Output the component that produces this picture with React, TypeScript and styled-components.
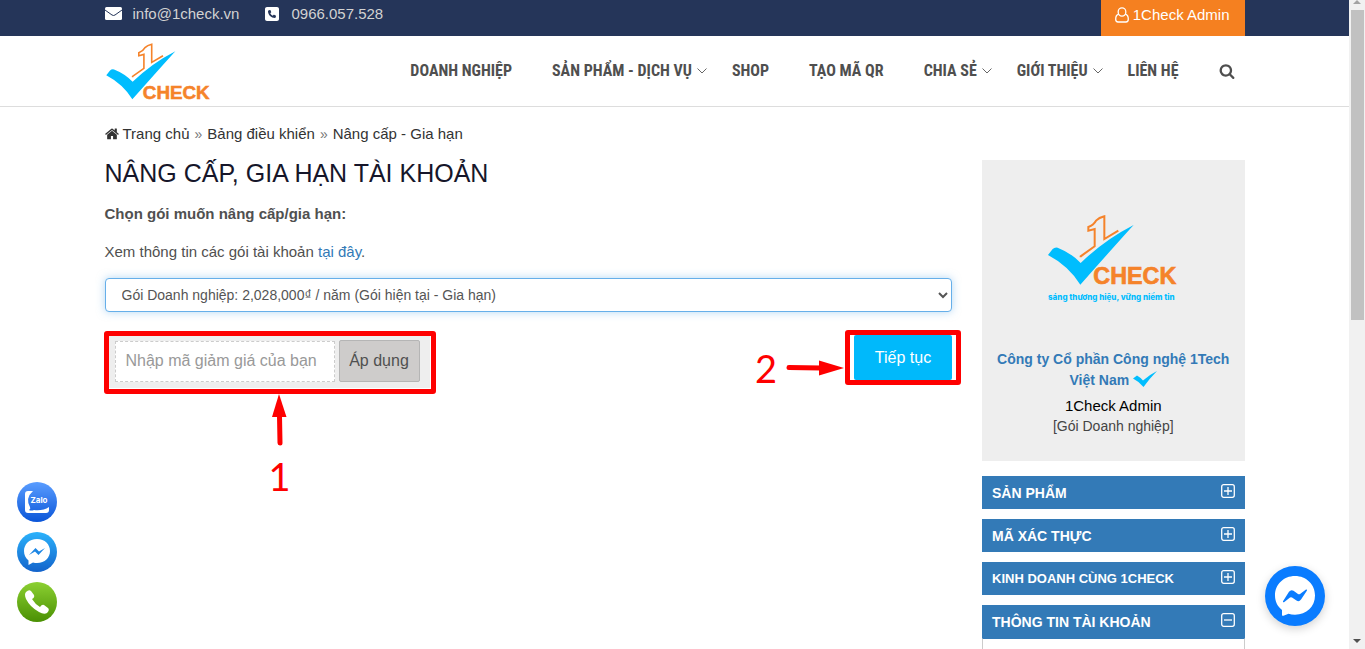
import React from "react";
import styled, { createGlobalStyle } from "styled-components";
import { FaSquarePhone } from "react-icons/fa6";

const GlobalStyle = createGlobalStyle`
  *, *::before, *::after { box-sizing: border-box; }
  html, body { margin: 0; background: #fff; }
  body {
    font-family: "Liberation Sans", Arial, sans-serif;
    font-size: 15px;
    line-height: 20px;
    color: #505050;
    overflow: hidden;
  }
  a { color: inherit; text-decoration: none; }
  h1, p, ul { margin: 0; padding: 0; }
  ul { list-style: none; }
`;

/* ---------- page frame ---------- */

const Frame = styled.div`
  display: flex;
  height: 100vh;
`;

const Page = styled.div`
  flex: 1;
  min-width: 0;
  overflow: hidden;
`;

const ScrollTrack = styled.div`
  display: flex;
  flex-direction: column;
  align-items: center;
  width: 16px;
  background: #f1f1f1;
`;

const ScrollThumb = styled.div`
  width: 13px;
  height: 310px;
  background: #c1c1c1;
`;

const ScrollArrow = styled.svg`
  flex: none;
  width: 16px;
  height: 10px;
`;

const ScrollSpace = styled.div`
  flex: 1;
`;

const Container = styled.div`
  max-width: 1170px;
  margin: 0 auto;
  padding: 0 15px;
`;

/* ---------- top bar ---------- */

const TopBar = styled.div`
  background: #253559;
  color: #d2d2d2;
`;

const TopRow = styled(Container)`
  display: flex;
  justify-content: space-between;
  height: 36px;
`;

const Contacts = styled.div`
  display: flex;
  gap: 25px;
  padding-top: 4px;
`;

const Contact = styled.a`
  display: flex;
  gap: 11px;
  height: 20px;
  svg { margin-top: 2px; color: #fff; }
`;

const AdminLink = styled.a`
  display: flex;
  gap: 4px;
  padding: 5px 15px 0 14px;
  background: #f58020;
  color: #fff;
  svg { margin-top: 2px; }
`;

/* ---------- header ---------- */

const Header = styled.header`
  border-bottom: 1px solid #ddd;
`;

const HeaderRow = styled(Container)`
  display: flex;
  justify-content: space-between;
  height: 70px;
`;

const LogoLink = styled.a`
  padding: 7px 0 0 1px;
`;

const Nav = styled.nav`
  display: flex;
  align-items: center;
  gap: 40px;
  padding-right: 10px;
  font-family: "Roboto Condensed", "Liberation Sans Narrow", "Liberation Sans", sans-serif;
  font-size: 16px;
  font-weight: 700;
  color: #4f4f4f;
`;

const NavItem = styled.a`
  position: relative;
  white-space: nowrap;
`;

const Chevron = styled.svg`
  position: absolute;
  left: calc(100% + 5px);
  top: 7px;
`;

const SearchButton = styled.button`
  display: flex;
  padding: 0;
  border: 0;
  background: none;
  color: #4f4f4f;
`;

/* ---------- body ---------- */

const Breadcrumb = styled.nav`
  display: flex;
  align-items: center;
  gap: 5px;
  padding-top: 17px;
  color: #333;
  span { color: #777; font-size: 14px; }
`;

const HomeLink = styled.a`
  display: flex;
  align-items: center;
  gap: 4px;
`;

const Columns = styled.div`
  display: flex;
  margin: 0 -15px;
  padding-top: 16px;
`;

const Main = styled.main`
  width: 75%;
  padding: 0 15px;
`;

const Aside = styled.aside`
  width: 25%;
  padding: 0 15px;
`;

const Title = styled.h1`
  font-size: 25px;
  line-height: 26px;
  font-weight: 400;
  color: #16162a;
`;

const FieldLabel = styled.label`
  display: block;
  margin-top: 18px;
  font-weight: 700;
`;

const Info = styled.p`
  margin-top: 18px;
  a { color: #337ab7; }
`;

const PackageSelect = styled.select`
  display: block;
  width: 100%;
  height: 34px;
  margin-top: 16px;
  padding: 0 12px;
  border: 1px solid #66afe9;
  border-radius: 4px;
  outline: 0;
  background: #fff;
  box-shadow: 0 0 8px rgba(102, 175, 233, 0.5);
  color: #555;
  font: 14px/20px "Liberation Sans", Arial, sans-serif;
`;

const Actions = styled.div`
  display: flex;
  align-items: flex-start;
  justify-content: space-between;
  margin-top: 20px;
`;

const Coupon = styled.div`
  position: relative;
  display: flex;
  align-items: center;
  gap: 4px;
  height: 56px;
  padding: 2px 10px 0;
  background: #eee;
`;

const CouponInput = styled.input`
  width: 220px;
  height: 41px;
  padding: 0 10px;
  border: 1px dashed #ccc;
  background: #fff;
  font: 16px/20px "Liberation Sans", Arial, sans-serif;
  &::placeholder { color: #999; opacity: 1; }
`;

const ApplyButton = styled.button`
  width: 81px;
  height: 42px;
  padding: 0;
  border: 1px solid #b5b5b5;
  border-radius: 2px;
  background: #cecccb;
  color: #505050;
  font: 16px/20px "Liberation Sans", Arial, sans-serif;
`;

const Continue = styled.div`
  position: relative;
  margin-top: 3px;
`;

const ContinueButton = styled.button`
  display: block;
  width: 98px;
  height: 45px;
  padding: 0;
  border: 0;
  border-radius: 2px;
  background: #00b9fb;
  color: #fff;
  font: 16px/20px "Liberation Sans", Arial, sans-serif;
`;

/* ---------- numbered guide marks, drawn over the form ---------- */

const Highlight = styled.div<{ $inset: string }>`
  position: absolute;
  inset: ${(p) => p.$inset};
  border: 5px solid #fe0000;
  border-radius: 3px;
  pointer-events: none;
`;

const StepBelow = styled.div`
  position: absolute;
  top: 62px;
  left: 164px;
  display: flex;
  flex-direction: column;
  align-items: center;
  gap: 6px;
`;

const StepBefore = styled.div`
  position: absolute;
  top: 9px;
  right: 108px;
  display: flex;
  align-items: center;
  gap: 9px;
`;

const StepNumber = styled.span`
  font-family: Lato, "Open Sans", sans-serif;
  font-size: 38px;
  line-height: 48px;
  color: #fe0000;
`;

/* ---------- sidebar ---------- */

const ProfileCard = styled.div`
  display: flex;
  flex-direction: column;
  align-items: center;
  height: 301px;
  margin-bottom: 15px;
  padding-top: 54px;
  background: #eee;
  text-align: center;
  color: #444;
`;

const Company = styled.a`
  margin: 45px 10px 0;
  font-size: 14px;
  line-height: 21px;
  font-weight: 700;
  color: #337ab7;
  svg { vertical-align: -2px; }
`;

const UserName = styled.a`
  margin-top: 5px;
  color: #000;
`;

const Plan = styled.span`
  font-size: 14px;
`;

const Panels = styled.div`
  display: flex;
  flex-direction: column;
  gap: 10px;
`;

const PanelHead = styled.button<{ $compact?: boolean }>`
  display: flex;
  align-items: center;
  justify-content: space-between;
  width: 100%;
  height: 33px;
  padding: 0 10px;
  border: 0;
  background: #337ab7;
  color: #fff;
  font: 700 ${(p) => (p.$compact ? "13px" : "14px")}/20px "Liberation Sans", Arial, sans-serif;
`;

const PanelBody = styled.ul`
  padding: 8px 24px;
  border: 1px solid #ccc;
  border-top: 1px solid #337ab7;
`;

/* ---------- floating contact buttons ---------- */

const ContactDock = styled.div`
  position: fixed;
  left: 17px;
  bottom: 27px;
  display: flex;
  flex-direction: column;
  gap: 10px;
`;

const DockLink = styled.a<{ $from: string; $to: string }>`
  display: flex;
  width: 40px;
  height: 40px;
  border-radius: 50%;
  color: #fff;
  background: linear-gradient(${(p) => p.$from}, ${(p) => p.$to});
`;

const ChatButton = styled.button`
  position: fixed;
  right: 40px;
  bottom: 23px;
  display: flex;
  width: 60px;
  height: 60px;
  padding: 0;
  border: 0;
  border-radius: 50%;
  background: #0a7cff;
  box-shadow: 0 3px 10px rgba(0, 0, 0, 0.18);
`;

/* ---------- drawings ---------- */

const LogoSvg = styled.svg`
  overflow: visible;
`;

const Logo = ({ tagline }: { tagline?: boolean }) => (
  <LogoSvg
    width={tagline ? 132 : 107}
    height={tagline ? 90 : 58}
    viewBox={tagline ? "216 190 396 270" : "218 193 398 215"}
    role="img"
    aria-label="1Check"
  >
    <path
      d="M219 313L233 295Q239 289 248 291Q289 307 317 337Q388 268 476 223Q440 262 316 402Q280 345 219 313Z"
      fill="#00bdfe"
    />
    <path
      d="M317 320V317L359 287V235L340 240V229Q356 223 363 210Q372 201 388 197V265L430 240"
      fill="none"
      stroke="#f5832a"
      strokeWidth="6"
    />
    <text x="355" y="401" fill="#f5832a" stroke="#f5832a" strokeWidth="2" fontFamily="Liberation Sans" fontWeight="700" fontSize="70">
      CHECK
    </text>
    {tagline && (
      <text x="219" y="447" fill="#00bdfe" fontFamily="Inter, sans-serif" fontWeight="800" fontSize="24">
        sáng thương hiệu, vững niềm tin
      </text>
    )}
  </LogoSvg>
);

const EnvelopeIcon = () => (
  <svg width="17" height="15" viewBox="0 0 17 15">
    <rect y="1" width="17" height="13" rx="1.500" fill="currentColor" />
    <path d="M0 4L7 9Q8.500 10 10 9L17 4" fill="none" stroke="#253559" strokeWidth="1" />
  </svg>
);

const UserIcon = () => (
  <svg width="14" height="16" viewBox="0 0 14 16" fill="none" stroke="currentColor" strokeWidth="1.300">
    <rect x="3.200" y="0.900" width="7.600" height="8.200" rx="3.800" />
    <path d="M3.700 7.200Q0.700 8 0.700 12.200Q0.700 15 3 15H11Q13.300 15 13.300 12.200Q13.300 8 10.300 7.200" />
  </svg>
);

const SearchIcon = () => (
  <svg width="16" height="16" viewBox="0 0 1792 1792" fill="currentColor">
    <path d="M1216 832q0-185-131.500-316.500t-316.500-131.500-316.500 131.500-131.500 316.500 131.500 316.500 316.500 131.500 316.500-131.500 131.500-316.500zm512 832q0 52-38 90t-90 38q-54 0-90-38l-343-342q-179 124-399 124-143 0-273.500-55.500t-225-150-150-225-55.500-273.500 55.500-273.500 150-225 225-150 273.500-55.500 273.500 55.500 225 150 150 225 55.500 273.500q0 220-124 399l343 343q37 37 37 90z" />
  </svg>
);

const HomeIcon = () => (
  <svg width="14" height="14" viewBox="64 100 1664 1600" fill="currentColor">
    <path d="M1472 992v480q0 26-19 45t-45 19h-384v-384h-256v384h-384q-26 0-45-19t-19-45v-480q0-1 .5-3t.5-3l575-474 575 474q1 2 1 6zm223-69l-62 74q-8 9-21 11h-3q-13 0-21-7l-692-577-692 577q-12 8-24 7-13-2-21-11l-62-74q-8-10-7-23.500t11-21.500l719-599q32-26 76-26t76 26l244 204v-195q0-14 9-23t23-9h192q14 0 23 9t9 23v408l219 182q10 8 11 21.500t-7 23.500z" />
  </svg>
);

const ToggleIcon = ({ open }: { open?: boolean }) => (
  <svg width="14" height="18" viewBox="0 0 14 18" fill="none" stroke="currentColor">
    <rect x="0.700" y="0.700" width="12.600" height="12.600" rx="2" strokeWidth="1.300" />
    <path d={open ? "M3 7H11" : "M3 7H11M7 3V11"} strokeWidth="1.300" />
  </svg>
);

const CheckMark = () => (
  <svg width="24" height="16" viewBox="0 0 24 16">
    <path d="M0 7.500L4 4.500Q7.500 6.500 10 9.500Q16 4 24 0Q17 7 10.500 16Q6 10.500 0 7.500Z" fill="#00bdfe" />
  </svg>
);

const ZaloIcon = () => (
  <svg width="40" height="40" viewBox="0 0 40 40">
    <path
      d="M16 9H11Q8 9 8 12V28Q8 31 11 31H29Q32 31 32 28V25Q26 29 17 28Q14 29 12 28Q14 27 13 25Q8 16 16 9Z"
      fill="#fff"
    />
    <text x="22" y="21" textAnchor="middle" fill="#fff" fontFamily="Inter, sans-serif" fontWeight="700" fontSize="8">
      Zalo
    </text>
  </svg>
);

const MessengerSmall = () => (
  <svg width="40" height="40" viewBox="0 0 40 40">
    <path d="M20 7C12 7 7 12.500 7 19C7 23 8.500 26 11.500 28.500V33L16 30.500Q18 31 20 31C28 31 33 25.500 33 19C33 12.500 28 7 20 7Z" fill="#fff" />
    <path d="M12 23L18.500 16L22 19.500L28 16L21.500 23L18 19.500Z" fill="#1c86e4" />
  </svg>
);

const PhoneIcon = () => (
  <svg width="40" height="40" viewBox="0 0 40 40">
    <path
      d="M9 10Q12 7 14 9L17 13Q18 15.500 15 17Q18 22 23 25Q25 22 27 23L31 26Q33 28 30 31Q27 33 22 30Q13 25 9 17Q7 12 9 10Z"
      fill="#fff"
    />
  </svg>
);

const MessengerLarge = () => (
  <svg width="60" height="60" viewBox="0 0 60 60">
    <path
      d="M30 10C18.500 10 10 18.500 10 29.500C10 35.500 12.500 40.500 17 44V49Q17.200 50.200 18.500 49.700L23.500 47.700Q26.500 48.700 30 48.700C41.500 48.700 50 40.500 50 29.500C50 18.500 41.500 10 30 10Z"
      fill="#fff"
    />
    <path
      d="M18 35.300L24 25.700Q26 23.200 28.500 24.700L33 28Q34 28.600 35 28L41 23.500Q42.300 23.200 42 24.500L36 33.500Q34 36.300 31.500 34.500L27 31.500Q26 31 25 31.500L19 36.200Q17.700 36.600 18 35.300Z"
      fill="#0a7cff"
    />
  </svg>
);

const ArrowUp = () => (
  <svg width="16" height="52" viewBox="0 0 16 52">
    <path d="M7 0L14.500 23H0Z" fill="#fe0000" />
    <path d="M7.500 22L8 49" stroke="#fe0000" strokeWidth="5" strokeLinecap="round" />
  </svg>
);

const ArrowRight = () => (
  <svg width="58" height="16" viewBox="0 0 58 16">
    <path d="M58 8L33 15.500V0.500Z" fill="#fe0000" />
    <path d="M3 7.500L35 8" stroke="#fe0000" strokeWidth="5" strokeLinecap="round" />
  </svg>
);

/* ---------- data ---------- */

const navItems = [
  { label: "DOANH NGHIỆP" },
  { label: "SẢN PHẨM - DỊCH VỤ", menu: true },
  { label: "SHOP" },
  { label: "TẠO MÃ QR" },
  { label: "CHIA SẺ", menu: true },
  { label: "GIỚI THIỆU", menu: true },
  { label: "LIÊN HỆ" },
];

const panels = [
  { label: "SẢN PHẨM" },
  { label: "MÃ XÁC THỰC" },
  { label: "KINH DOANH CÙNG 1CHECK", compact: true },
  { label: "THÔNG TIN TÀI KHOẢN", items: ["Nâng cấp"] },
];

export default function App() {
  return (
    <>
      <GlobalStyle />
      <Frame>
        <Page>
          <TopBar>
            <TopRow>
              <Contacts>
                <Contact href="mailto:info@1check.vn">
                  <EnvelopeIcon />
                  info@1check.vn
                </Contact>
                <Contact href="tel:0966057528">
                  <FaSquarePhone size={16} />
                  0966.057.528
                </Contact>
              </Contacts>
              <AdminLink href="#admin">
                <UserIcon />
                1Check Admin
              </AdminLink>
            </TopRow>
          </TopBar>

          <Header>
            <HeaderRow>
              <LogoLink href="#home">
                <Logo />
              </LogoLink>
              <Nav>
                {navItems.map((item) => (
                  <NavItem key={item.label} href="#menu">
                    {item.label}
                    {item.menu && (
                      <Chevron width="10" height="6" viewBox="0 0 10 6" fill="none" stroke="#666">
                        <path d="M0.500 0.500L5 5L9.500 0.500" />
                      </Chevron>
                    )}
                  </NavItem>
                ))}
                <SearchButton type="button" aria-label="Tìm kiếm">
                  <SearchIcon />
                </SearchButton>
              </Nav>
            </HeaderRow>
          </Header>

          <Container>
            <Breadcrumb>
              <HomeLink href="#home">
                <HomeIcon />
                Trang chủ
              </HomeLink>
              <span>»</span>
              <a href="#dashboard">Bảng điều khiển</a>
              <span>»</span>
              <a href="#upgrade">Nâng cấp - Gia hạn</a>
            </Breadcrumb>

            <Columns>
              <Main>
                <Title>NÂNG CẤP, GIA HẠN TÀI KHOẢN</Title>
                <FieldLabel htmlFor="package">Chọn gói muốn nâng cấp/gia hạn:</FieldLabel>
                <Info>
                  Xem thông tin các gói tài khoản <a href="#packages">tại đây</a>.
                </Info>
                <PackageSelect id="package">
                  <option>Gói Doanh nghiệp: 2,028,000₫ / năm (Gói hiện tại - Gia hạn)</option>
                </PackageSelect>
                <Actions>
                  <Coupon>
                    <CouponInput aria-label="Mã giảm giá" placeholder="Nhập mã giảm giá của bạn" />
                    <ApplyButton type="button">Áp dụng</ApplyButton>
                    <Highlight $inset="-1px -6px -6px -1px" />
                    <StepBelow>
                      <ArrowUp />
                      <StepNumber>1</StepNumber>
                    </StepBelow>
                  </Coupon>
                  <Continue>
                    <ContinueButton type="button">Tiếp tục</ContinueButton>
                    <Highlight $inset="-5px -9px -5px -9px" />
                    <StepBefore>
                      <StepNumber>2</StepNumber>
                      <ArrowRight />
                    </StepBefore>
                  </Continue>
                </Actions>
              </Main>

              <Aside>
                <ProfileCard>
                  <Logo tagline />
                  <Company href="#company">
                    Công ty Cổ phần Công nghệ 1Tech Việt Nam <CheckMark />
                  </Company>
                  <UserName href="#admin">1Check Admin</UserName>
                  <Plan>[Gói Doanh nghiệp]</Plan>
                </ProfileCard>
                <Panels>
                  {panels.map((panel) => (
                    <section key={panel.label}>
                      <PanelHead type="button" $compact={panel.compact}>
                        {panel.label}
                        <ToggleIcon open={!!panel.items} />
                      </PanelHead>
                      {panel.items && (
                        <PanelBody>
                          {panel.items.map((text) => (
                            <li key={text}>
                              <a href="#account">{text}</a>
                            </li>
                          ))}
                        </PanelBody>
                      )}
                    </section>
                  ))}
                </Panels>
              </Aside>
            </Columns>
          </Container>
        </Page>

        <ScrollTrack aria-hidden="true">
          <ScrollArrow viewBox="0 0 16 10">
            <path d="M8 0L12 4H4Z" fill="#a3a3a3" />
          </ScrollArrow>
          <ScrollThumb />
          <ScrollSpace />
          <ScrollArrow viewBox="0 0 16 10">
            <path d="M4 0H12L8 4Z" fill="#505050" />
          </ScrollArrow>
        </ScrollTrack>
      </Frame>

      <ContactDock>
        <DockLink href="#zalo" aria-label="Zalo" $from="#5a9dff" $to="#0a55d8">
          <ZaloIcon />
        </DockLink>
        <DockLink href="#messenger" aria-label="Messenger" $from="#2bb2fb" $to="#1363cb">
          <MessengerSmall />
        </DockLink>
        <DockLink href="tel:0966057528" aria-label="Gọi điện" $from="#8cd032" $to="#4a9003">
          <PhoneIcon />
        </DockLink>
      </ContactDock>
      <ChatButton type="button" aria-label="Chat Messenger">
        <MessengerLarge />
      </ChatButton>
    </>
  );
}
